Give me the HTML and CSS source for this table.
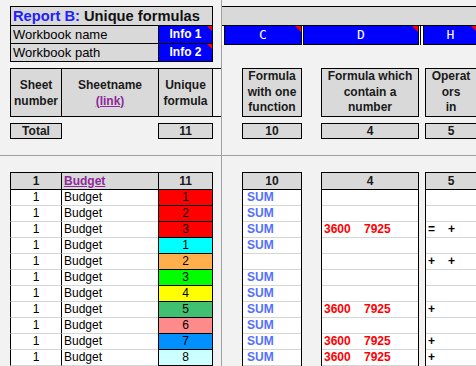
FILE: index.html
```html
<!DOCTYPE html>
<html>
<head>
<meta charset="utf-8">
<link rel="stylesheet" href="styles.css">
</head>
<body>
<div class="sheet">
  <section class="pane pane-tl">
    <div class="titlebox">
      <div class="title"><span class="rb">Report B:</span> Unique formulas</div>
      <div class="kv"><div class="k">Workbook name</div><div class="v">Info 1<i class="tri"></i></div></div>
      <div class="kv"><div class="k">Workbook path</div><div class="v">Info 2<i class="tri"></i></div></div>
    </div>
    <div class="hdr3">
      <div class="hc"><div>Sheet<br>number</div></div>
      <div class="hc"><div>Sheetname<br><span class="lnk">(link)</span></div></div>
      <div class="hc"><div>Unique<br>formula</div></div>
    </div>
    <div class="tot3">
      <div class="tc">Total</div>
      <div></div>
      <div class="tc">11</div>
    </div>
  </section>

  <section class="pane pane-tr">
    <div class="band"></div>
    <div class="colrow">
      <div class="colhd w-c">C<i class="tri"></i></div>
      <div class="colhd w-d">D<i class="tri"></i></div>
      <div class="sep"></div>
      <div class="colhd w-h">H<i class="tri"></i></div>
    </div>
    <div class="rhdr">
      <div class="rbox b1"><div>Formula<br>with one<br>function</div></div>
      <div class="rbox b2"><div>Formula which<br>contain a<br>number</div></div>
      <div class="rbox b3"><div>Operat<br>ors<br>in</div></div>
    </div>
    <div class="rtot">
      <div class="rt b1">10</div>
      <div class="rt b2">4</div>
      <div class="rt b3">5</div>
    </div>
  </section>

  <section class="pane pane-bl">
    <div class="dtable">
      <div class="drow dhead"><div class="n">1</div><div class="name"><span class="lnk">Budget</span></div><div>11</div></div>
      <div class="drow"><div class="n">1</div><div class="name">Budget</div><div class="c-red">1</div></div>
      <div class="drow"><div class="n">1</div><div class="name">Budget</div><div class="c-red">2</div></div>
      <div class="drow"><div class="n">1</div><div class="name">Budget</div><div class="c-red">3</div></div>
      <div class="drow"><div class="n">1</div><div class="name">Budget</div><div class="c-cyan">1</div></div>
      <div class="drow"><div class="n">1</div><div class="name">Budget</div><div class="c-orange">2</div></div>
      <div class="drow"><div class="n">1</div><div class="name">Budget</div><div class="c-green">3</div></div>
      <div class="drow"><div class="n">1</div><div class="name">Budget</div><div class="c-yellow">4</div></div>
      <div class="drow"><div class="n">1</div><div class="name">Budget</div><div class="c-sea">5</div></div>
      <div class="drow"><div class="n">1</div><div class="name">Budget</div><div class="c-salmon">6</div></div>
      <div class="drow"><div class="n">1</div><div class="name">Budget</div><div class="c-blue">7</div></div>
      <div class="drow"><div class="n">1</div><div class="name">Budget</div><div class="c-ice">8</div></div>
    </div>
  </section>

  <section class="pane pane-br">
    <div class="rcols">
      <div class="rcol b1">
        <div class="rh">10</div>
        <div class="rc sum">SUM</div>
        <div class="rc sum">SUM</div>
        <div class="rc sum">SUM</div>
        <div class="rc sum">SUM</div>
        <div class="rc"></div>
        <div class="rc sum">SUM</div>
        <div class="rc sum">SUM</div>
        <div class="rc sum">SUM</div>
        <div class="rc sum">SUM</div>
        <div class="rc sum">SUM</div>
        <div class="rc sum">SUM</div>
      </div>
      <div class="rcol b2">
        <div class="rh">4</div>
        <div class="rc"></div>
        <div class="rc"></div>
        <div class="rc num"><span>3600</span><span>7925</span></div>
        <div class="rc"></div>
        <div class="rc"></div>
        <div class="rc"></div>
        <div class="rc"></div>
        <div class="rc num"><span>3600</span><span>7925</span></div>
        <div class="rc"></div>
        <div class="rc num"><span>3600</span><span>7925</span></div>
        <div class="rc num"><span>3600</span><span>7925</span></div>
      </div>
      <div class="rcol b3">
        <div class="rh">5</div>
        <div class="rc"></div>
        <div class="rc"></div>
        <div class="rc ops"><span>=</span><span>+</span></div>
        <div class="rc"></div>
        <div class="rc ops"><span>+</span><span>+</span></div>
        <div class="rc"></div>
        <div class="rc"></div>
        <div class="rc ops"><span>+</span></div>
        <div class="rc"></div>
        <div class="rc ops"><span>+</span></div>
        <div class="rc ops"><span>+</span></div>
      </div>
    </div>
  </section>
</div>
</body>
</html>
```

FILE: styles.css
```css
* { box-sizing: border-box; }
body {
  margin: 0;
  font-family: "Liberation Sans", Arial, sans-serif;
  color: #000;
}
.sheet {
  display: grid;
  grid-template-columns: 221px 254px;
  grid-template-rows: 155px 210px;
  gap: 1px;
  background: #a0a0a0;
  width: 476px;
  height: 366px;
  overflow: hidden;
}
.pane {
  background: #f2f2f2;
  overflow: hidden;
}
.tri {
  position: absolute;
  top: 0;
  right: 0;
  width: 0;
  height: 0;
  border-left: 6px solid transparent;
  border-top: 6px solid #ff0000;
}
.lnk {
  color: #8e2a9a;
  text-decoration: underline;
}

/* top-left */
.pane-tl { padding: 6px 0 0 10px; }
.titlebox {
  width: 203px;
  border: 1px solid #000;
  background: #d9d9d9;
}
.title {
  height: 19px;
  border-bottom: 1px solid #000;
  padding-left: 2px;
  font-size: 14.7px;
  font-weight: bold;
  line-height: 18px;
  white-space: nowrap;
  color: #111;
}
.title .rb { color: #2020ff; }
.kv {
  display: grid;
  grid-template-columns: 147px 54px;
  height: 17px;
  font-size: 13px;
  line-height: 17px;
}
.kv:not(:last-child) {
  height: 18px;
  border-bottom: 1px solid #000;
}
.k { padding-left: 2px; white-space: nowrap; }
.v {
  position: relative;
  border-left: 1px solid #000;
  background: #0000ff;
  color: #fff;
  font-weight: bold;
  font-size: 12px;
  text-align: center;
}
.v .tri { border-left-width: 5px; border-top-width: 5px; }
.hdr3 {
  display: grid;
  grid-template-columns: 51px 97px 55px;
  height: 49px;
  margin-top: 6px;
  border-top: 1px solid #000;
  border-bottom: 1px solid #000;
}
.hc {
  display: flex;
  align-items: center;
  justify-content: center;
  text-align: center;
  border-left: 1px solid #000;
  background: #d9d9d9;
  font-size: 12px;
  font-weight: bold;
  line-height: 16px;
  color: #1a1a1a;
}
.hc:last-child { border-right: 1px solid #000; }
.tot3 {
  display: grid;
  grid-template-columns: 52px 96px 55px;
  height: 16px;
  margin-top: 6px;
}
.tc {
  border: 1px solid #000;
  background: #d9d9d9;
  font-size: 12px;
  font-weight: bold;
  line-height: 14px;
  text-align: center;
  color: #1a1a1a;
}

/* top-right */
.pane-tr { padding-top: 6px; }
.band {
  height: 20px;
  border-top: 1px solid #000;
  border-bottom: 1px solid #000;
  background: #d9d9d9;
}
.colrow {
  display: flex;
  height: 19px;
  background: #fff;
  padding-left: 2px;
}
.colhd {
  position: relative;
  flex: none;
  height: 19px;
  background: #0000ff;
  border: 1px solid #000;
  border-top: 0;
  color: #fff;
  text-align: center;
  font-family: "DejaVu Sans Mono", monospace;
  font-size: 13px;
  line-height: 18px;
}
.w-c { width: 78px; margin-right: 1px; }
.w-d { width: 116px; }
.sep {
  flex: none;
  width: 3px;
  margin-left: 1px;
  border-left: 1px solid #000;
}
.w-h { width: 55px; }
.rhdr, .rtot {
  display: flex;
  padding-left: 20px;
}
.rhdr { margin-top: 23px; }
.rtot { margin-top: 6px; }
.b1 { flex: none; width: 60px; margin-right: 19px; }
.b2 { flex: none; width: 98px; margin-right: 6px; }
.b3 { flex: none; width: 52px; }
.rbox {
  height: 49px;
  border: 1px solid #000;
  background: #d9d9d9;
  display: flex;
  align-items: center;
  justify-content: center;
  text-align: center;
  font-size: 12px;
  font-weight: bold;
  line-height: 15.5px;
  color: #1a1a1a;
  white-space: nowrap;
}
.rt {
  height: 16px;
  border: 1px solid #000;
  background: #d9d9d9;
  font-size: 12px;
  font-weight: bold;
  line-height: 14px;
  text-align: center;
  color: #1a1a1a;
}

/* bottom-left */
.pane-bl { padding: 16px 0 0 10px; }
.drow {
  display: grid;
  grid-template-columns: 51px 97px 55px;
  height: 16px;
}
.drow > div {
  border-left: 1px solid #000;
  border-bottom: 1px solid #d4d4d4;
  background: #fff;
  font-size: 12px;
  line-height: 15px;
  white-space: nowrap;
}
.drow > div:last-child {
  border-right: 1px solid #000;
  border-bottom-color: #000;
  text-align: center;
}
.drow .n { text-align: center; }
.drow .name { padding-left: 2px; }
.drow.dhead { height: 18px; }
.drow.dhead > div {
  border-top: 1px solid #000;
  border-bottom: 1px solid #000;
  background: #d9d9d9;
  font-weight: bold;
  line-height: 16px;
  color: #1a1a1a;
}
.drow .c-red { background: #ff0000; }
.drow .c-cyan { background: #00ffff; }
.drow .c-orange { background: #ffb04c; }
.drow .c-green { background: #00ff00; }
.drow .c-yellow { background: #ffff00; }
.drow .c-sea { background: #40c070; }
.drow .c-salmon { background: #ff8a8a; }
.drow .c-blue { background: #0090ff; }
.drow .c-ice { background: #ccffff; }

/* bottom-right */
.pane-br { padding: 16px 0 0 20px; }
.rcols { display: flex; }
.rcol {
  border-left: 1px solid #000;
  border-right: 1px solid #000;
}
.rh {
  height: 18px;
  border-top: 1px solid #000;
  border-bottom: 1px solid #000;
  background: #d9d9d9;
  text-align: center;
  font-size: 12px;
  font-weight: bold;
  line-height: 16px;
  color: #1a1a1a;
}
.rc {
  height: 16px;
  border-bottom: 1px solid #d4d4d4;
  background: #fff;
  font-size: 12px;
  line-height: 15px;
  white-space: nowrap;
}
.sum {
  color: #5470ff;
  font-weight: bold;
  padding-left: 4px;
}
.num {
  color: #ff0000;
  font-weight: bold;
  padding-left: 2px;
}
.num span { display: inline-block; width: 40px; }
.ops {
  font-weight: bold;
  padding-left: 2px;
}
.ops span { display: inline-block; width: 20px; }
```
